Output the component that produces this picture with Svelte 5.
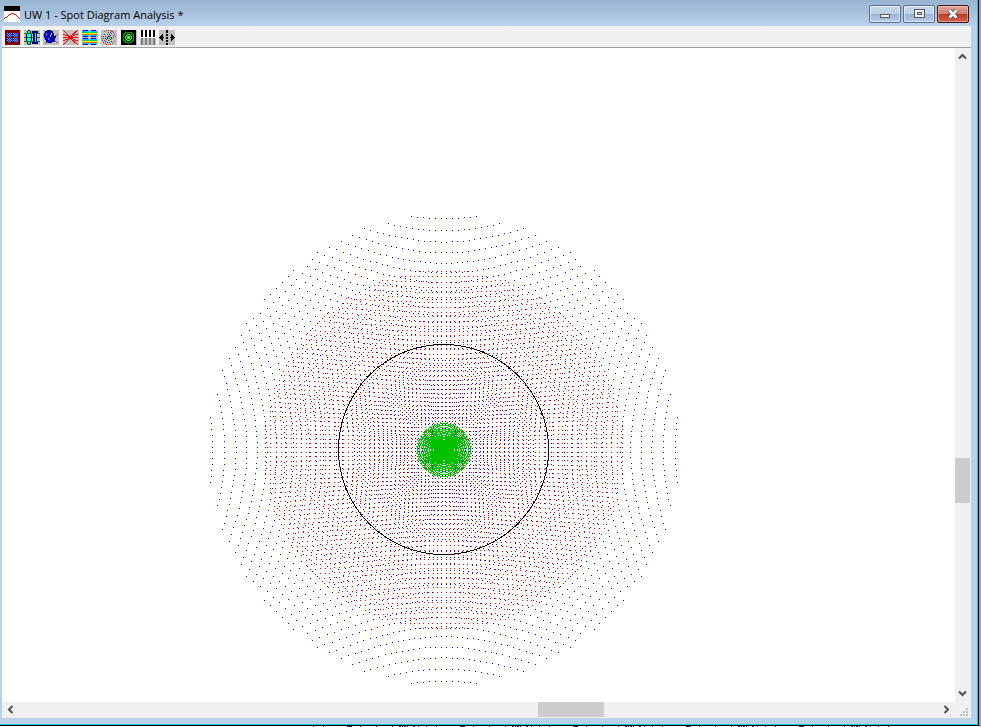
<script>
  // Ray fan traced on a square pupil grid, one entry per wavelength
  const GRID = 40;
  const PUPIL_LIMIT = 39.89;
  const CENTER_X = 441.5;
  const CENTER_Y = 401.5;

  const wavelengths = [
    { name: 'F', color: '#0000ff', a: 3.3, b: 0.001208, c: 2.75e-7 },
    { name: 'C', color: '#ff0000', a: 4.138, b: 0.00024, c: 0 },
    { name: 'd', color: '#00c000', a: -0.19, b: 0.00055, c: 0 }
  ];

  function tracePath({ a, b, c }) {
    let d = '';
    for (let iy = -GRID; iy < GRID; iy++) {
      for (let ix = -GRID; ix < GRID; ix++) {
        const px = ix + 0.5;
        const py = iy + 0.5;
        const r2 = px * px + py * py;
        if (r2 > PUPIL_LIMIT * PUPIL_LIMIT) continue;
        const scale = a + b * r2 + c * r2 * r2;
        const x = Math.round(CENTER_X + px * scale);
        const y = Math.round(CENTER_Y + py * scale);
        d += `M${x} ${y}h1v1h-1z`;
      }
    }
    return d;
  }

  const spots = wavelengths.map((w) => ({ ...w, d: tracePath(w) }));

  const tools = [
    'Spot matrix',
    'Lens layout',
    'Shaded lens',
    'Ray fan',
    'Wavefront map',
    'Spot diagram',
    'Point spread function',
    'Resolution bars',
    'Center view'
  ];
</script>

<div class="desktop">
  <div class="window">
    <header class="titlebar">
      <svg class="app-icon" width="16" height="16" shape-rendering="crispEdges" aria-hidden="true">
        <path fill="#fff" d="M0 0h16v16H0z" />
        <path fill="#000" d="M0 0h16v5H0z" />
        <path fill="#f00" d="M7 7h3v1H7zM5 8h2v1H5zM10 8h2v1h-2zM4 9h1v1H4zM12 9h1v1h-1zM3 10h1v1H3zM13 10h1v1h-1zM1 11h2v1H1zM14 11h1v1h-1zM0 12h1v1H0zM15 12h1v1h-1z" />
      </svg>
      <h1>UW 1 - Spot Diagram Analysis *</h1>
      <div class="window-buttons">
        <button type="button" aria-label="Minimize">
          <svg width="12" height="10" shape-rendering="crispEdges"><path d="M1 5h10v4H1z" fill="#53565c" /><path d="M2 6h8v2H2z" fill="#f5f5f5" /></svg>
        </button>
        <button type="button" aria-label="Maximize">
          <svg width="12" height="10" shape-rendering="crispEdges"><path d="M1 0h11v9H1z" fill="#53565c" /><path d="M2 1h9v7H2z" fill="#f5f5f5" /><path d="M4 3h5v3H4z" fill="#53565c" /><path d="M5 4h3v1H5z" fill="#b9d1ea" /></svg>
        </button>
        <button type="button" class="close" aria-label="Close">
          <svg width="12" height="10" viewBox="0 0 12 10"><path d="M2.5 1.5l7 7M9.5 1.5l-7 7" stroke="#53565c" stroke-width="4.5" /><path d="M2.5 1.5l7 7M9.5 1.5l-7 7" stroke="#fff" stroke-width="2.5" /></svg>
        </button>
      </div>
    </header>

    <div class="client">
      <div class="toolbar" role="toolbar" aria-label="Analysis tools">
        {#each tools as tool, i}
          <button type="button" aria-label={tool} title={tool}>
            <svg width="16" height="16" viewBox="0 0 16 16" shape-rendering="crispEdges">
              {#if i === 0}
                <path fill="#800000" d="M0 0h15v15H0z" />
                <path fill="#00f" d="M2 3h5v4H2zM8 3h5v4H8zM2 8h5v4H2zM8 8h5v4H8z" />
                <path stroke="#3cf" stroke-dasharray="1 1" d="M2 3.5h5M8 3.5h5M3 4.5h4M9 4.5h4M2 5.5h5M8 5.5h5M3 6.5h4M9 6.5h4M2 8.5h5M8 8.5h5M3 9.5h4M9 9.5h4M2 10.5h5M8 10.5h5M3 11.5h4M9 11.5h4" />
              {:else if i === 1}
                <path stroke="#008000" d="M0 3.5h16M0 7.5h16M0 11.5h16" />
                <path fill="#0ff" d="M4 1h2v1h1v11H6v1H4v-1H3V2h1zM9 3h4v10H9z" />
                <path fill="#000" d="M4 0h2v1H4zM3 1h1v3H3zM2 4h1v7H2zM3 11h1v3H3zM4 14h2v1H4zM6 1h1v3H6zM7 4h1v7H7zM6 11h1v3H6z" />
                <path fill="#000080" d="M8 1h6v2H8zM9 3h2v9H9zM12 3h1v9h-1zM8 12h6v2H8z" />
                <path stroke="#008000" d="M3 3.5h4M3 7.5h4M3 11.5h4" />
              {:else if i === 2}
                <path stroke="#666" d="M0 5l15 8M2 14L15 4" />
                <path fill="#000080" d="M4 0h4v1h2v2h1v3h2v2h-1v3h-1v1H9v1H5v-1H3v-2H2V8H1V3h1V1h2z" />
                <path fill="#00f" d="M4 2h2v4h1v2h2v1h2v2H8v1H5v-1H4V9H3V7H2V4h2z" />
                <path fill="#c0c0c0" d="M8 3h1v2H8zM7 5h1v2H7z" />
                <path fill="#69f" d="M3 3h1v3H3zM5 8h1v2H5z" />
              {:else if i === 3}
                <path fill="none" stroke="#f00" d="M0 0l7 7 8-7M0 4l7 3 8-3M0 7.5h15M0 11l7-3 8 3M0 15l7-7 8 7" />
                <path fill="#f00" d="M6 6h3v3H6z" />
              {:else if i === 4}
                <path fill="#00f" d="M1 0h5v1H1zM9 0h5v1H9zM1 6h5v1H1zM9 6h5v1H9zM1 8h5v1H1zM9 8h5v1H9zM1 14h5v1H1zM9 14h5v1H9z" />
                <path fill="#0cf" d="M0 1h7v1H0zM8 1h7v1H8zM0 5h7v1H0zM8 5h7v1H8zM0 9h7v1H0zM8 9h7v1H8zM0 13h7v1H0zM8 13h7v1H8z" />
                <path fill="#0c4" d="M0 2h7v1H0zM8 2h7v1H8zM0 10h7v1H0zM8 10h7v1H8z" />
                <path fill="#ff0" d="M0 3h15v1H0zM0 11h15v1H0z" />
                <path fill="#f60" d="M0 4h7v1H0zM8 4h7v1H8zM0 12h7v1H0zM8 12h7v1H8z" />
              {:else if i === 5}
                <g fill="none" stroke-dasharray="1 1">
                  <circle cx="7.5" cy="7.5" r="7" stroke="#a33" />
                  <circle cx="7.5" cy="7.5" r="5" stroke="#448" />
                  <circle cx="7.5" cy="7.5" r="3" stroke="#060" />
                  <circle cx="7.5" cy="7.5" r="1" stroke="#00a" />
                </g>
              {:else if i === 6}
                <path fill="#000" d="M0 0h15v15H0z" />
                <circle cx="7.5" cy="7.5" r="5.5" fill="none" stroke="#00a000" />
                <circle cx="7.5" cy="7.5" r="4" fill="#006000" />
                <path fill="#3e3" d="M6 4h3v1H6zM5 5h1v1H5zM9 5h1v1H9zM4 6h1v3H4zM10 6h1v3h-1zM5 9h1v1H5zM9 9h1v1H9zM6 10h3v1H6zM6 6h3v3H6z" />
                <path fill="#cfc" d="M7 7h1v1H7z" />
              {:else if i === 7}
                <path fill="#fff" d="M0 0h16v8H0z" />
                <path fill="#000" d="M1 0h2v7H1zM5 0h2v7H5zM9 0h2v7H9zM13 0h2v7h-2z" />
                <path fill="#808080" d="M1 8h2v7H1zM5 8h2v7H5zM9 8h2v7H9zM13 8h2v7h-2z" />
              {:else}
                <path fill="#000" d="M7 0h2v3H7zM7 4h2v2H7zM7 7h2v2H7zM7 10h2v2H7zM7 13h2v2H7zM0 7h5v1H0zM1 6h1v3H1zM2 5h1v5H2zM3 4h1v7H3zM11 7h5v1h-5zM12 4h1v7h-1zM13 5h1v5h-1zM14 6h1v3h-1z" />
              {/if}
            </svg>
          </button>
        {/each}
      </div>

      <div class="view">
        <svg class="plot" role="img" aria-label="Spot diagram" shape-rendering="crispEdges">
          {#each spots as spot (spot.name)}
            <path d={spot.d} fill={spot.color} />
          {/each}
          <circle cx={CENTER_X} cy={CENTER_Y} r="105" fill="none" stroke="#000" />
        </svg>
        <div class="scrollbar vertical">
          <button type="button" aria-label="Scroll up">
            <svg width="9" height="7"><path d="M1 5.5l3.5-3.5L8 5.5" /></svg>
          </button>
          <div class="space before"></div>
          <div class="thumb"></div>
          <div class="space after"></div>
          <button type="button" aria-label="Scroll down">
            <svg width="9" height="7"><path d="M1 1.5L4.5 5 8 1.5" /></svg>
          </button>
        </div>
      </div>

      <div class="bottom">
        <div class="scrollbar horizontal">
          <button type="button" aria-label="Scroll left">
            <svg width="7" height="9"><path d="M5.5 1L2 4.5 5.5 8" /></svg>
          </button>
          <div class="space before"></div>
          <div class="thumb"></div>
          <div class="space after"></div>
          <button type="button" aria-label="Scroll right">
            <svg width="7" height="9"><path d="M1.5 1L5 4.5 1.5 8" /></svg>
          </button>
        </div>
        <div class="grip">
          <svg width="8" height="8" shape-rendering="crispEdges">
            <path fill="#bfbfbf" d="M6 0h2v2H6zM3 3h2v2H3zM6 3h2v2H6zM0 6h2v2H0zM3 6h2v2H3zM6 6h2v2H6z" />
          </svg>
        </div>
      </div>
    </div>
  </div>
  <!-- top edge of the window lying underneath -->
  <div class="underneath">
    <svg width="100%" height="1" shape-rendering="crispEdges" aria-hidden="true">
      <path stroke="#333" stroke-dasharray="1 9 1 23 5 8 1 15 1 15 1 6 2 1 1 1 2 1 1 5 2 3 1 7" d="M313 .5h594" />
    </svg>
  </div>
</div>

<style>
  :global(body) {
    margin: 0;
  }

  .desktop {
    display: flex;
    flex-direction: column;
    height: 100vh;
    box-sizing: border-box;
    border-right: 2px solid #a0a0a0;
    overflow: hidden;
    font-family: 'Open Sans', 'Noto Sans', sans-serif;
    font-size: 11px;
  }

  .window {
    flex: 1;
    min-height: 0;
    display: flex;
    flex-direction: column;
    box-sizing: border-box;
    padding: 0 6px 6px 2px;
    background: linear-gradient(#98b3d1 0, #b9d1ea 26px);
    border-right: 1px solid #26c0e0;
    border-bottom: 1px solid #26c0e0;
    box-shadow: 0 0 0 1px #000;
    margin: 0 1px 1px 0;
  }

  .titlebar {
    display: flex;
    align-items: center;
    height: 26px;
    padding: 2px 2px 0 2px;
    box-sizing: border-box;
  }

  h1 {
    flex: 1;
    margin: 0 0 0 4px;
    padding-top: 2px;
    font-size: 11px;
    line-height: 16px;
    font-weight: 400;
    color: #000;
    white-space: nowrap;
  }

  button {
    display: flex;
    align-items: center;
    justify-content: center;
    padding: 0;
    border: 0;
    background: none;
  }

  svg {
    display: block;
  }

  .window-buttons {
    display: flex;
    gap: 2px;
  }

  .window-buttons button {
    width: 32px;
    height: 18px;
    border: 1px solid #5c718c;
    border-radius: 2px;
    background: linear-gradient(#c5d8ec 0, #b9d0e8 50%, #98b4d3 50%, #b5cde8 100%);
    box-shadow: inset 0 0 0 1px rgba(255, 255, 255, 0.5);
  }

  .window-buttons .close {
    border-color: #43141a;
    background: linear-gradient(#e0a59b 0, #cf7c6e 50%, #b93a25 50%, #d0664d 100%);
    box-shadow: inset 0 0 0 1px rgba(255, 255, 255, 0.35);
  }

  .client {
    flex: 1;
    min-height: 0;
    display: flex;
    flex-direction: column;
    background: #f0f0f0;
  }

  .toolbar {
    display: flex;
    gap: 3px;
    height: 22px;
    box-sizing: border-box;
    padding: 4px 0 0 3px;
    border-bottom: 1px solid #a0a0a0;
  }

  .toolbar button {
    width: 16px;
    height: 15px;
    overflow: hidden;
    align-items: flex-start;
    background: #c0c0c0;
  }

  .toolbar button:nth-child(3n) {
    margin-right: 1px;
  }

  .view {
    flex: 1;
    min-height: 0;
    display: flex;
  }

  .plot {
    flex: 1;
    min-width: 0;
    height: 100%;
    background: #fff;
  }

  .scrollbar {
    display: flex;
  }

  .scrollbar path {
    fill: none;
    stroke: #505050;
    stroke-width: 2;
  }

  .thumb {
    background: #cdcdcd;
  }

  .vertical {
    flex-direction: column;
    width: 16px;
  }

  .vertical button {
    width: 15px;
    height: 17px;
  }

  .vertical .thumb {
    flex: 45;
    margin-right: 1px;
  }

  .vertical .before {
    flex: 393;
  }

  .vertical .after {
    flex: 182;
  }

  .bottom {
    display: flex;
    height: 16px;
  }

  .horizontal {
    flex: 1;
  }

  .horizontal button {
    width: 17px;
    height: 15px;
  }

  .horizontal .thumb {
    flex: 66;
    margin-bottom: 1px;
  }

  .horizontal .before {
    flex: 520;
  }

  .horizontal .after {
    flex: 334;
  }

  .grip {
    display: flex;
    align-items: flex-end;
    justify-content: flex-end;
    width: 16px;
    box-sizing: border-box;
    padding: 0 3px 2px 0;
  }

  .underneath {
    height: 1px;
    background: #fff;
  }
</style>
